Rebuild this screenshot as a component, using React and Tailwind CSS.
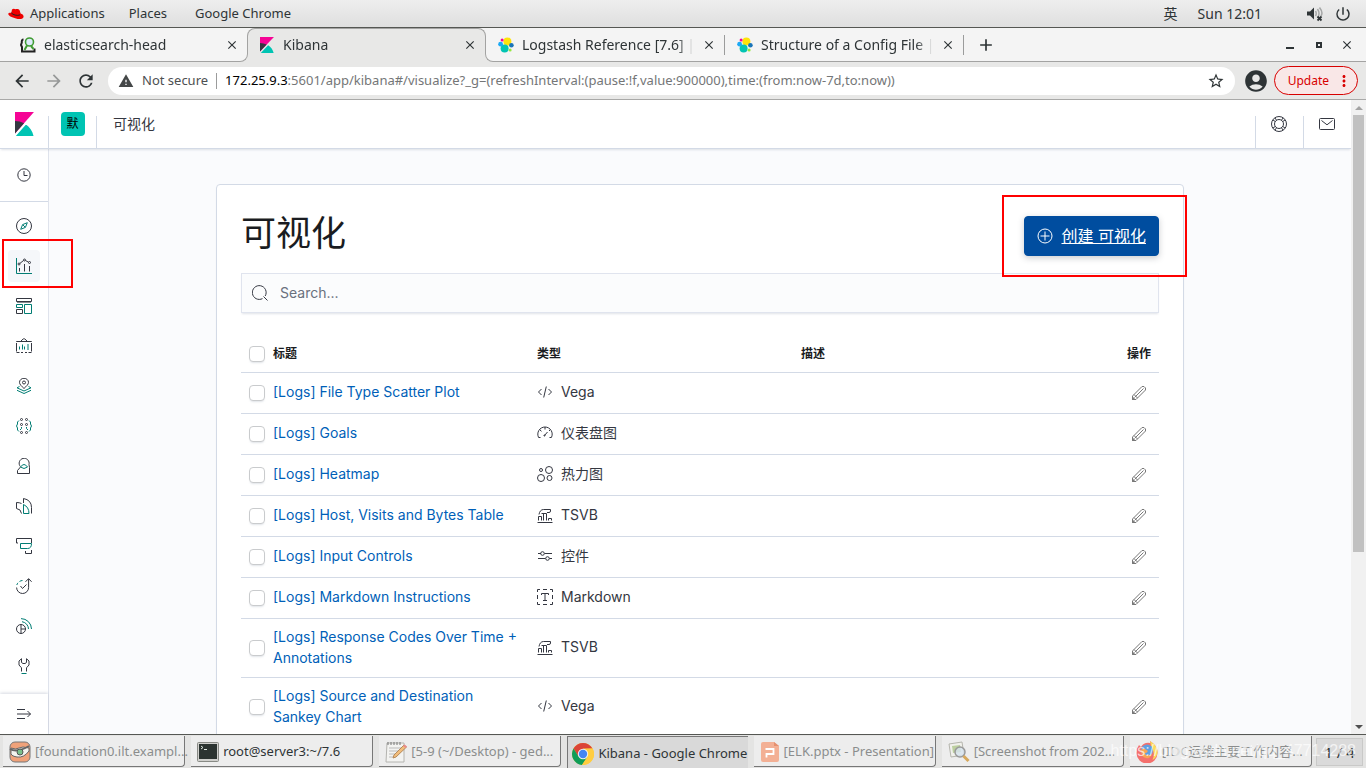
import React from 'react';
import {
    MdAccountCircle,
    MdAdd,
    MdArrowBack,
    MdArrowForward,
    MdClose,
    MdMoreVert,
    MdPowerSettingsNew,
    MdRefresh,
    MdStarBorder,
    MdWarning,
} from 'react-icons/md';

const DARK = '#343741';
const TEAL = '#017d73';

const Icon = ({ size = 16, color = DARK, children }) => (
    <svg width={size} height={size} viewBox="0 0 16 16" fill="none" stroke={color} strokeWidth="1" aria-hidden="true" className="shrink-0">
        {children}
    </svg>
);

/* ---------- logos ---------- */

const KibanaLogo = ({ className }) => (
    <svg viewBox="4 0 25 32" preserveAspectRatio="none" className={className} aria-hidden="true">
        <path fill="#f50495" d="M4 0v28.789L28.935.017z" />
        <path fill="#343741" d="M4 12v16.789l11.906-13.738A24.721 24.721 0 0 0 4 12" />
        <path fill="#00c4b3" d="M18.479 16.664L6.268 30.754l-1.073 1.237h23.191c-1.252-6.292-4.883-11.719-9.908-15.327" />
    </svg>
);

const ElasticLogo = () => (
    <svg width="16" height="16" viewBox="0 0 16 16" aria-hidden="true" className="shrink-0">
        <circle cx="9.4" cy="4.6" r="4" fill="#fee30a" />
        <circle cx="6.6" cy="11.4" r="4" fill="#02c4b3" />
        <circle cx="2.6" cy="7.2" r="2.4" fill="#1ba9f5" />
        <circle cx="13.4" cy="8.2" r="2.3" fill="#1a75b8" />
        <circle cx="4.1" cy="2.9" r="1.5" fill="#f50495" />
        <circle cx="12.1" cy="12.9" r="1.5" fill="#93e83e" />
    </svg>
);

const HeadLogo = () => (
    <svg width="16" height="16" viewBox="0 0 16 16" fill="none" aria-hidden="true" className="shrink-0">
        <path d="M3.5 2.5Q1.500 2.500 1.800 5.500L1 8l1 2v4.500h12.500v-3" stroke="#222" strokeWidth="2" />
        <circle cx="9.5" cy="5" r="4" fill="#dcebfa" stroke="#3f9b32" strokeWidth="1.6" />
        <path d="M7 8.500L4.500 13M11 9l2.500 3" stroke="#3f9b32" strokeWidth="2" />
    </svg>
);

const RedHatLogo = () => (
    <svg width="16" height="16" viewBox="0 0 16 16" aria-hidden="true" className="shrink-0">
        <path fill="#e00" d="M4 3.600C5 2.500 6.500 2.700 7.500 3.300c1-.6 3.600-.3 4.200 1.200l.9 3c1.500.3 3 1.500 3 3 0 2.400-3.200 2.900-6 2.400C5.500 12.200 1 10.300.3 8.300 0 7 1.700 6.600 3.300 6.800z" />
        <path stroke="#222" strokeWidth="1" fill="none" d="M3.300 6.900c1.500 2 6 3.200 8.700 2" />
    </svg>
);

const VolumeIcon = () => (
    <svg width="18" height="16" viewBox="0 0 18 16" fill="none" aria-hidden="true">
        <path d="M1 5.500h3l4-4v12l-4-4H1z" fill="#2e3436" />
        <path d="M9.500 5q1.500 2.500 0 5M11.500 3q3 4.500 0 9M13.500 1.500q4 5 1.500 8.500" stroke="#a5a7a7" strokeWidth="1.500" />
        <path d="M11.500 10.500l4 4m0-4l-4 4" stroke="#2e3436" strokeWidth="1.800" />
    </svg>
);

/* ---------- side navigation icons ---------- */

const ClockIcon = () => (
    <Icon>
        <circle cx="8" cy="8" r="6.200" />
        <path d="M8 4v4.500h3.500" />
    </Icon>
);

const DiscoverIcon = () => (
    <Icon>
        <circle cx="8" cy="8" r="7.500" />
        <path stroke={TEAL} d="M11.300 4.700L9.400 9.400l-4.700 1.900 1.900-4.700zM6.800 6.800l2.400 2.400" />
    </Icon>
);

const VisualizeIcon = () => (
    <Icon>
        <path stroke={TEAL} d="M.5 0v15.500H16" />
        <path d="M3.500 10v3.500M8.500 6v7.500M13.500 8v5.500M3.800 5.500l3.700-3M9.500 2.500l3 1.700" />
        <circle cx="3" cy="6" r="1" />
        <circle cx="8.500" cy="2" r="1" />
        <circle cx="13.500" cy="4.500" r="1" />
    </Icon>
);

const DashboardIcon = () => (
    <Icon>
        <path d="M.5.5h15v3H.5z" />
        <path stroke="#8a8c92" d="M1 4.500h14" />
        <path stroke={TEAL} d="M.5 6.500h6v3h-6zM8.500 6.500h7v9h-7z" />
        <path d="M.5 11.500h6v4h-6z" />
    </Icon>
);

const CanvasIcon = () => (
    <Icon>
        <path d="M.5 4v-.5h15V4M.5 5v8.500M15.500 5v8.500M.5 14.500h3M5 14.500h2M9 14.500h2M12.500 14.500h3M4.500 3.500L7.200.9h1.600l2.700 2.600" />
        <path stroke={TEAL} d="M3.500 8.500v3M6.500 6.500v5M8.500 8.500v3M11 7h2M11 9h2M11 11h2" />
    </Icon>
);

const MapsIcon = () => (
    <Icon>
        <path d="M8 10.500C5.500 8 3.500 6.500 3.500 4.300a4.500 4 0 0 1 9 0C12.500 6.500 10.500 8 8 10.500z" />
        <circle cx="8" cy="4.500" r="1.500" />
        <path stroke={TEAL} d="M3.500 8.500L1 9.800l7 3.200 7-3.200-2.500-1.300M1 12.300l7 3.200 7-3.200" />
    </Icon>
);

const MlIcon = () => (
    <Icon>
        <circle cx="5.500" cy="1.500" r="1" />
        <circle cx="10.500" cy="1.500" r="1" />
        <circle cx="5.500" cy="6.500" r="1" />
        <circle cx="10.500" cy="6.500" r="1" />
        <circle cx="5.500" cy="14.500" r="1" />
        <circle cx="10.500" cy="14.500" r="1" />
        <path stroke={TEAL} d="M3 2.500L1.500 4v2L.5 8l1 2v2L3 13.500M13 2.500L14.500 4v2l1 2-1 2v2L13 13.500M5.500 9v1.500L4 12M10.500 9v1.500L12 12" />
    </Icon>
);

const MetricsIcon = () => (
    <Icon>
        <path d="M4.300 8.500A5 5 0 1 1 13 6.500l.5 3v6h-12v-3l3-3.500" />
        <path stroke={TEAL} d="M4.500 9q3.500-5 7 0-3.500 3-7 0z" />
    </Icon>
);

const LogsIcon = () => (
    <Icon>
        <path d="M5.500 5.500q-2-1-5-1v6q4.500.5 5 5M7.500 5V.5q8 1.500 8 9v6" />
        <path stroke={TEAL} d="M7.500 6.500v9h5.500Q13 9 7.500 6.500z" />
    </Icon>
);

const ApmIcon = () => (
    <Icon>
        <path d="M2 5H.5V.5h15V5M9.500 13v2.500h6V12" />
        <path stroke={TEAL} d="M4.500 5.500h11q0 5-4 5h-7z" />
    </Icon>
);

const UptimeIcon = () => (
    <Icon>
        <path stroke={TEAL} d="M.8 7A6 6 0 0 1 2 4.800M3.500 3.500A6 6 0 0 1 6.500 2.500" />
        <path d="M.6 9.500a6 6 0 0 0 12 0V1M9.500 3.800l3.100-3.200 3 3.200M4.500 8l2 2.500 4-4" />
    </Icon>
);

const SiemIcon = () => (
    <Icon>
        <circle cx="5" cy="11" r="4.500" />
        <path d="M5 6.500v9M5 11h4.500" />
        <path stroke={TEAL} d="M5 .6A10.500 10.500 0 0 1 15.500 11M6 3.700a7.500 7.500 0 0 1 6.500 7.300" />
    </Icon>
);

const DevToolsIcon = () => (
    <Icon>
        <path d="M5.500 13.500V9.800L3 7V3l2.500-2.300V4.500l1.500 1h2l1.500-1V.7L13 3v4l-2.500 2.800v3.700" />
        <path stroke={TEAL} d="M5.500 15.500h5" />
    </Icon>
);

const ExpandIcon = () => (
    <Icon>
        <path d="M1 3.500h8M1 8h13.500M1 12.500h8M11.500 5l3 3-3 3" />
    </Icon>
);

/* ---------- header and table icons ---------- */

const HelpIcon = () => (
    <Icon>
        <circle cx="8" cy="8" r="7.500" />
        <circle cx="8" cy="8" r="4.500" />
        <path d="M4 2l1.500 2.200M2 4l2.200 1.500M12 2l-1.500 2.200M14 4l-2.200 1.500M4 14l1.500-2.200M2 12l2.200-1.500M12 14l-1.500-2.200M14 12l-2.200-1.500" />
    </Icon>
);

const MailIcon = () => (
    <Icon>
        <rect x=".5" y="2.500" width="15" height="11" rx="1" />
        <path d="M2.500 4.500L8 8.800l5.500-4.300" />
    </Icon>
);

const SearchIcon = () => (
    <Icon>
        <path d="M10.500 13.600A6.900 6.900 0 1 1 13.200 11M11.500 11.500l4 4" />
    </Icon>
);

const PlusCircleIcon = () => (
    <Icon color="#ffffff">
        <circle cx="8" cy="8" r="7" />
        <path d="M8 3.500v9M3.500 8h9" />
    </Icon>
);

const VegaIcon = () => (
    <Icon>
        <path d="M4.500 5l-3 3 3 3M11.500 5l3 3-3 3M9.300 2.500L6.700 13.500" />
    </Icon>
);

const GaugeIcon = () => (
    <Icon>
        <path d="M3.500 12.500H1.600a7.200 7.200 0 1 1 12.800 0h-1.900M8 2v2.500M3 5l1.500 1.300M13 5l-1 1M7.500 10.500L10.500 7" />
        <circle cx="7.500" cy="10.500" r=".6" />
    </Icon>
);

const HeatmapIcon = () => (
    <Icon>
        <circle cx="4" cy="4" r="1.500" />
        <circle cx="12" cy="4" r="3.500" />
        <circle cx="4" cy="12" r="3.500" />
        <circle cx="12.500" cy="12" r="2.500" />
    </Icon>
);

const TsvbIcon = () => (
    <Icon>
        <path d="M.5 15.500h15M1.500 13.500v-4h3v4M6.500 13.500v-7M9.500 13.500v-7M11.500 13.500v-2h3v2" />
        <path d="M2 7.500C2.500 4.500 4 2.500 6.500 2.500h7v1.500q0 1.500-1.500 1.500h-2M4.500 6.500h5" />
    </Icon>
);

const ControlsIcon = () => (
    <Icon>
        <path d="M1 5.500h3M7.500 5.500H15M1 10.500h7.500M12.500 10.500H15" />
        <circle cx="5.500" cy="5.500" r="1.800" />
        <circle cx="10.500" cy="10.500" r="1.800" />
    </Icon>
);

const MarkdownIcon = () => (
    <Icon>
        <path d="M.5 3V.5H3M6 .5h4M13 .5h2.500V3M15.500 6v4M15.500 13v2.500H13M10 15.500H6M3 15.500H.5V13M.5 10V6" />
        <path d="M4.500 6V4.500h7V6M8 4.500v7M6 11.500h4" />
    </Icon>
);

const PencilIcon = () => (
    <Icon color="#777777">
        <path d="M1.500 14.500V11L11 1.500h2L14.500 3v2L5 14.500zM3.500 12.500L12.500 3.500M3 9.500L6.500 13" />
        <path fill="#777777" d="M1.500 14.500v-2.500l2.500 2.500z" />
    </Icon>
);

const typeIcons = {
    Vega: VegaIcon,
    仪表盘图: GaugeIcon,
    热力图: HeatmapIcon,
    TSVB: TsvbIcon,
    控件: ControlsIcon,
    Markdown: MarkdownIcon,
};

const visualizations = [
    { title: '[Logs] File Type Scatter Plot', type: 'Vega' },
    { title: '[Logs] Goals', type: '仪表盘图' },
    { title: '[Logs] Heatmap', type: '热力图' },
    { title: '[Logs] Host, Visits and Bytes Table', type: 'TSVB' },
    { title: '[Logs] Input Controls', type: '控件' },
    { title: '[Logs] Markdown Instructions', type: 'Markdown' },
    { title: '[Logs] Response Codes Over Time + Annotations', type: 'TSVB' },
    { title: '[Logs] Source and Destination Sankey Chart', type: 'Vega' },
];

const navItems = [
    { name: 'Discover', icon: DiscoverIcon },
    { name: 'Visualize', icon: VisualizeIcon, active: true },
    { name: 'Dashboard', icon: DashboardIcon },
    { name: 'Canvas', icon: CanvasIcon },
    { name: 'Maps', icon: MapsIcon },
    { name: 'Machine Learning', icon: MlIcon },
    { name: 'Metrics', icon: MetricsIcon },
    { name: 'Logs', icon: LogsIcon },
    { name: 'APM', icon: ApmIcon },
    { name: 'Uptime', icon: UptimeIcon },
    { name: 'SIEM', icon: SiemIcon },
    { name: 'Dev Tools', icon: DevToolsIcon },
];

/* ---------- desktop panel ---------- */

const TopPanel = () => (
    <header className="flex h-7 shrink-0 items-center border-b border-[#555753] bg-linear-to-b from-[#eeeeee] to-[#dfdfdf] pr-3.5 pl-2 text-[13px] text-[#2e3436]">
        <button className="flex items-center gap-1.5">
            <RedHatLogo />
            Applications
        </button>
        <button className="ml-6">Places</button>
        <button className="ml-7">Google Chrome</button>
        <div className="ml-auto flex items-center text-sm">
            <span className="mr-5">英</span>
            <span className="mr-11">Sun 12:01</span>
            <button aria-label="Volume" className="mr-2.5"><VolumeIcon /></button>
            <button aria-label="Power"><MdPowerSettingsNew size={18} /></button>
        </div>
    </header>
);

/* ---------- browser window ---------- */

const Tab = ({ icon, title, active, divider }) => (
    <div
        className={
            'relative flex h-full w-[239px] min-w-0 items-center pr-2 ' +
            (active
                ? 'z-10 rounded-t-lg border-x border-t border-[#a3a3a2] bg-[#e8e8e7] pb-px pl-3'
                : 'border-b border-b-[#a3a3a2] pl-3')
        }
    >
        {active && (
            <>
                <span className="absolute bottom-0 -left-2 size-2 bg-[#e8e8e7]">
                    <span className="block size-2 rounded-br-lg border-r border-b border-[#a3a3a2] bg-[#f4f4f4]" />
                </span>
                <span className="absolute -right-2 bottom-0 size-2 bg-[#e8e8e7]">
                    <span className="block size-2 rounded-bl-lg border-b border-l border-[#a3a3a2] bg-[#f4f4f4]" />
                </span>
            </>
        )}
        {icon}
        <span className="ml-2 min-w-0 flex-1 overflow-hidden mask-r-from-90% whitespace-nowrap">{title}</span>
        <button aria-label={'Close ' + title} className="ml-2"><MdClose size={14} /></button>
        {divider && <span className="ml-2 -mr-2 h-5 w-px bg-[#9b9c9c]" />}
    </div>
);

const TabStrip = () => (
    <div className="flex h-[34px] shrink-0 bg-[#f4f4f4] text-sm text-[#2e3436]">
        <div className="w-2 border-b border-[#a3a3a2]" />
        <Tab icon={<HeadLogo />} title="elasticsearch-head" />
        <Tab icon={<KibanaLogo className="mr-px h-4 w-3.5 shrink-0" />} title="Kibana" active />
        <Tab icon={<ElasticLogo />} title="Logstash Reference [7.6] | Elastic" divider />
        <Tab icon={<ElasticLogo />} title="Structure of a Config File | Logstash" divider />
        <div className="flex flex-1 items-center border-b border-[#a3a3a2] px-3">
            <button aria-label="New tab"><MdAdd size={20} /></button>
            <div className="ml-auto flex items-center gap-[18px]">
                <button aria-label="Minimize" className="mr-1 flex size-2 items-end"><span className="h-0.5 w-2 bg-[#2e3436]" /></button>
                <button aria-label="Maximize" className="size-1.5 border-2 border-[#2e3436]" />
                <button aria-label="Close window"><MdClose size={14} /></button>
            </div>
        </div>
    </div>
);

const Toolbar = () => (
    <div className="flex h-[38px] shrink-0 items-center border-b border-[#a9a9a8] bg-[#e8e8e7] pr-2 pl-3 text-[13px] text-[#2e3436]">
        <div className="flex gap-3">
            <button aria-label="Back"><MdArrowBack size={20} /></button>
            <button aria-label="Forward" className="text-[#969898]"><MdArrowForward size={20} /></button>
            <button aria-label="Reload"><MdRefresh size={20} /></button>
        </div>
        <div className="ml-3 flex h-7 flex-1 items-center rounded-full bg-white px-2.5">
            <MdWarning size={16} className="text-[#444748]" />
            <span className="ml-2 text-[#4d5052]">Not secure</span>
            <span className="mx-2 h-4 w-px bg-[#9b9c9c]" />
            <span className="flex-1 text-[#747677]">
                <span className="text-black">172.25.9.3</span>
                :5601/app/kibana#/visualize?_g=(refreshInterval:(pause:!f,value:900000),time:(from:now-7d,to:now))
            </span>
            <button aria-label="Bookmark"><MdStarBorder size={18} /></button>
        </div>
        <button aria-label="Profile" className="ml-2"><MdAccountCircle size={26} /></button>
        <button className="ml-[5px] flex h-[29px] items-center gap-1.5 rounded-full border border-[#d80000] bg-[#f9e7e7] pr-1 pl-[13px] text-xs text-[#d80000]">
            Update
            <MdMoreVert size={18} />
        </button>
    </div>
);

const Scrollbar = () => (
    <div className="flex w-[15px] shrink-0 flex-col items-center bg-[#f1f1f1]">
        <span className="flex h-[15px] items-center">
            <span className="border-x-4 border-b-4 border-x-transparent border-b-[#a3a3a3]" />
        </span>
        <span className="h-[69%] w-[11px] bg-[#c1c1c1]" />
        <span className="mt-auto flex h-[15px] items-center">
            <span className="border-x-4 border-t-4 border-x-transparent border-t-[#505050]" />
        </span>
    </div>
);

/* ---------- Kibana ---------- */

const KibanaHeader = () => (
    <header className="z-10 flex h-[49px] shrink-0 items-center border-b border-[#d3dae6] bg-white text-[#343741] shadow-[0_2px_2px_-1px_rgba(152,162,179,0.3)]">
        <a href="#home" aria-label="Kibana" className="flex w-12 justify-center">
            <KibanaLogo className="h-6 w-[19px]" />
        </a>
        <span className="h-8 w-px self-end bg-[#d3dae6]" />
        <button className="flex w-[47px] justify-center">
            <span className="flex size-6 items-center justify-center rounded bg-[#00c4b3] text-xs text-black">默</span>
        </button>
        <span className="h-8 w-px self-end bg-[#d3dae6]" />
        <span className="ml-4 flex-1 text-sm">可视化</span>
        <span className="h-8 w-px self-end bg-[#d3dae6]" />
        <button aria-label="Help" className="flex w-[47px] justify-center pr-px"><HelpIcon /></button>
        <span className="h-8 w-px self-end bg-[#d3dae6]" />
        <button aria-label="Newsfeed" className="flex w-[47px] justify-center pr-px"><MailIcon /></button>
    </header>
);

const SideNav = () => (
    <nav className="flex w-[49px] shrink-0 flex-col border-r border-[#dfe3ec] bg-white shadow-[2px_0_2px_-1px_rgba(152,162,179,0.3)]">
        <button aria-label="Recently viewed" className="flex h-[53px] shrink-0 items-center justify-center border-b border-[#d3dae6]">
            <ClockIcon />
        </button>
        <ul className="flex-1 pt-1">
            {navItems.map(({ name, icon: NavIcon, active }) => (
                <li key={name} className="relative flex h-10 items-center justify-center">
                    <a
                        href={'#' + name}
                        aria-label={name}
                        className={'flex size-8 items-center justify-center rounded ' + (active ? 'bg-[#f5f7fa]' : '')}
                    >
                        <NavIcon />
                    </a>
                    {active && <span className="absolute -top-[7px] left-[2px] z-20 h-[49px] w-[71px] border-2 border-[#ff0000]" />}
                </li>
            ))}
        </ul>
        <button aria-label="Expand" className="flex h-10 shrink-0 items-center justify-center shadow-[0_-1px_3px_rgba(152,162,179,0.4)]">
            <ExpandIcon />
        </button>
    </nav>
);

const Checkbox = ({ label }) => (
    <input
        type="checkbox"
        aria-label={label}
        className="block size-4 appearance-none rounded border border-[#c9cbcd] bg-white shadow-[0_2px_2px_-1px_rgba(152,162,179,0.3)]"
    />
);

const VisualizationTable = () => (
    <table className="mt-6 w-full table-fixed text-left text-sm leading-[21px]">
        <thead>
            <tr className="h-[35px] border-b border-[#d3dae6] text-xs text-[#1a1c21]">
                <th className="w-6 pl-2"><Checkbox label="Select all" /></th>
                <th className="px-2 font-bold">标题</th>
                <th className="px-2 font-bold">类型</th>
                <th className="px-2 font-bold">描述</th>
                <th className="w-[102px] px-2 text-right font-bold">操作</th>
            </tr>
        </thead>
        <tbody>
            {visualizations.map(({ title, type }) => {
                const TypeIcon = typeIcons[type];
                return (
                    <tr key={title} className="border-b border-[#d3dae6]">
                        <td className="pl-2"><Checkbox label={'Select ' + title} /></td>
                        <td className="px-2 pt-[7px] pb-[9px]">
                            <a href="#visualization" className="text-[#005fb8]">{title}</a>
                        </td>
                        <td className="px-2 pb-0.5">
                            <span className="flex items-center gap-2">
                                <TypeIcon />
                                {type}
                            </span>
                        </td>
                        <td />
                        <td className="p-2">
                            <button aria-label={'Edit ' + title} className="ml-auto flex size-6 items-center justify-center">
                                <PencilIcon />
                            </button>
                        </td>
                    </tr>
                );
            })}
        </tbody>
    </table>
);

const VisualizePage = () => (
    <main className="min-w-0 flex-1 overflow-hidden bg-[#fafbfd] px-4 pt-[35px]">
        <section className="mx-auto max-w-[968px] rounded border border-[#d3dae6] bg-white p-6 shadow-[0_2px_2px_-1px_rgba(152,162,179,0.3)]">
            <div className="flex h-16 items-start justify-between">
                <h1 className="text-[35px] leading-12 font-normal text-[#1a1c21]">可视化</h1>
                <div className="relative mt-[7px]">
                    <a href="#create" className="flex h-10 items-center gap-2 rounded border border-[#004d9f] bg-[#004d9f] px-3 text-base text-white shadow-[0_2px_6px_rgba(52,55,65,0.25)]">
                        <PlusCircleIcon />
                        <span className="underline">创建 可视化</span>
                    </a>
                    <span className="pointer-events-none absolute -top-[21px] -right-7 -bottom-[21px] -left-[22px] border-2 border-[#ff0000]" />
                </div>
            </div>
            <label className="flex h-10 items-center gap-3 border border-[#e0e4ee] bg-[#fbfcfd] px-2.5 shadow-[0_2px_2px_-1px_rgba(152,162,179,0.3)]">
                <SearchIcon />
                <input type="search" aria-label="Search" placeholder="Search..." className="flex-1 text-sm outline-none placeholder:text-[#69707d]" />
            </label>
            <VisualizationTable />
        </section>
    </main>
);

/* ---------- window list ---------- */

const MonsterIcon = () => (
    <svg width="22" height="22" viewBox="0 0 22 22" fill="none" aria-hidden="true" className="shrink-0">
        <rect x="1" y="1" width="20" height="20" rx="5" fill="#f0a27a" stroke="#777" />
        <path d="M2 7q5 2 8 0t10 0v3q-5 7-12 6T2 11z" fill="#f4f4ef" stroke="#666" />
        <path d="M1 8q7 4 19-3" stroke="#666" strokeWidth="2" />
        <circle cx="11" cy="11" r="3" fill="#7ac08a" stroke="#555" />
    </svg>
);

const TerminalIcon = () => (
    <svg width="22" height="20" viewBox="0 0 22 20" fill="none" aria-hidden="true" className="shrink-0">
        <rect x=".5" y=".5" width="21" height="19" rx="1" fill="#d0d0cd" stroke="#888a85" />
        <path d="M2 2h18v15H2z" fill="#2c3431" />
        <path d="M4 4l2 1.500L4 7M7 7.500h3" stroke="#e0e8e0" />
    </svg>
);

const GeditIcon = () => (
    <svg width="22" height="22" viewBox="0 0 22 22" fill="none" aria-hidden="true" className="shrink-0">
        <path d="M2 2h17v19H1z" fill="#f3f3f1" stroke="#b4b4b0" />
        <path d="M3 1v3M6 1v3M9 1v3M12 1v3M15 1v3" stroke="#777" />
        <path d="M4 7h12M4 10h12M4 13h8M4 16h6" stroke="#bbb" />
        <path d="M8 17l1-3L19 4l2.500 2L11 16z" fill="#f2bd7b" stroke="#b58a5c" />
        <path d="M18 5l1.500-1.500 2.500 2L20.500 7z" fill="#e98a8a" />
    </svg>
);

const ChromeIcon = () => (
    <svg width="22" height="22" viewBox="0 0 22 22" aria-hidden="true" className="shrink-0">
        <circle cx="11" cy="11" r="11" fill="#ffcd40" />
        <path d="M1.500 5.500A11 11 0 0 1 20.500 5.500L11 6l-4.500 8z" fill="#db4437" />
        <path d="M1.500 5.500A11 11 0 0 0 10 22l5.500-8.500H6.500z" fill="#0f9d58" />
        <path d="M20.500 5.500H11l4.800 8L10 22A11 11 0 0 0 20.500 5.500z" fill="#ffcd40" />
        <circle cx="11" cy="11" r="5.200" fill="#f1f1f1" />
        <circle cx="11" cy="11" r="4.200" fill="#4285f4" />
    </svg>
);

const PptIcon = () => (
    <svg width="20" height="22" viewBox="0 0 20 22" fill="none" aria-hidden="true" className="shrink-0">
        <path d="M3 1h11l5 4v14q0 2-2 2H3q-2 0-2-2V3q0-2 2-2z" fill="#f3b095" />
        <path d="M14 1v4h5z" fill="#e5906f" />
        <path d="M5.500 8h8v5h-7v3.500" stroke="#fff" strokeWidth="1.800" />
    </svg>
);

const ViewerIcon = () => (
    <svg width="22" height="22" viewBox="0 0 22 22" fill="none" aria-hidden="true" className="shrink-0">
        <path d="M1 3l13-2 2 13-13 2z" fill="#f1f1ec" stroke="#b5b5ad" />
        <path d="M4 5l8-1 1 7-8 1z" fill="#bccf9f" />
        <circle cx="12" cy="11" r="5" fill="#d7e3ef" fillOpacity=".8" stroke="#999" strokeWidth="1.500" />
        <path d="M15.500 15l5 5" stroke="#d6a85c" strokeWidth="3" />
    </svg>
);

const FirefoxIcon = () => (
    <svg width="22" height="22" viewBox="0 0 22 22" aria-hidden="true" className="shrink-0">
        <path d="M3 4l2 2q3-5 9-4V0q8 5 7.500 12A10.500 10.500 0 0 1 .5 12Q.5 7 3 4z" fill="#f4706c" />
        <path d="M14 0q8 5 7.500 12-1 5-5 7 3-7-1-12z" fill="#fbdc5b" />
        <circle cx="11" cy="9.500" r="6" fill="#5f9ee0" />
        <path d="M5 9q2-2 4-1l3 2q-2 3-4 2 3 4 8 1-2 5-6 4-5-1-5-8z" fill="#f8a454" />
    </svg>
);

const windows = [
    { title: '[foundation0.ilt.exampl...', icon: <MonsterIcon />, minimized: true },
    { title: 'root@server3:~/7.6', icon: <TerminalIcon /> },
    { title: '[5-9 (~/Desktop) - ged...', icon: <GeditIcon />, minimized: true },
    { title: 'Kibana - Google Chrome', icon: <ChromeIcon />, active: true },
    { title: '[ELK.pptx - Presentation]', icon: <PptIcon />, minimized: true },
    { title: '[Screenshot from 202...', icon: <ViewerIcon />, minimized: true },
    { title: '[IDC运维主要工作内容...', icon: <FirefoxIcon />, minimized: true },
];

const Taskbar = () => (
    <footer className="relative flex h-[34px] shrink-0 items-stretch gap-1 border-t border-[#555753] bg-[#e4e4e3] px-[3px] pt-px text-[13px]">
        <div className="flex min-w-0 flex-1 gap-1.5">
            {windows.map(({ title, icon, active, minimized }) => (
                <button
                    key={title}
                    className={
                        'flex min-w-0 flex-1 items-center gap-1 pt-0.5 whitespace-nowrap ' +
                        (active
                            ? 'border-t border-l border-[#777] bg-[#d9d9d9] pl-1 '
                            : 'mb-px rounded-br-sm border-r border-b border-[#777] bg-[#ededed] pl-1.5 ') +
                        (minimized ? 'text-[#8b8d8d]' : 'text-[#2e3436]')
                    }
                >
                    {icon}
                    {title}
                </button>
            ))}
        </div>
        <button className="my-0.5 w-[47px] border border-[#c9c9c8] bg-[#dadada] text-[15px] leading-6 text-[#2e3436]">1 / 4</button>
        <span className="pointer-events-none absolute top-1.5 right-2.5 font-['Liberation_Sans',sans-serif] text-base leading-5 text-white/70">
            https://blog.csdn.net/qq_47714288
        </span>
    </footer>
);

export default function App() {
    return (
        <div className="flex h-screen flex-col overflow-hidden font-['Noto_Sans','Noto_Sans_CJK_SC',sans-serif]">
            <TopPanel />
            <TabStrip />
            <Toolbar />
            <div className="flex min-h-0 flex-1 bg-white font-['Inter','Noto_Sans_CJK_SC',sans-serif] text-[#343741]">
                <div className="flex min-w-0 flex-1 flex-col">
                    <KibanaHeader />
                    <div className="flex min-h-0 flex-1">
                        <SideNav />
                        <VisualizePage />
                    </div>
                </div>
                <Scrollbar />
            </div>
            <Taskbar />
        </div>
    );
}
